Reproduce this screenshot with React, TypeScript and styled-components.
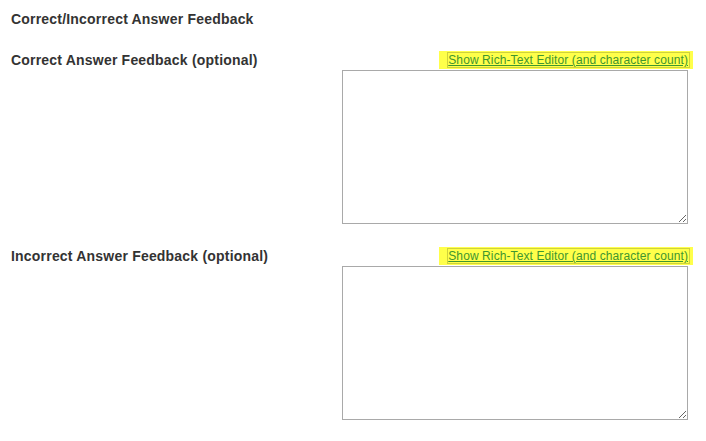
import React from "react";
import styled, { createGlobalStyle } from "styled-components";

const GlobalStyle = createGlobalStyle`
  body {
    margin: 0;
    background: #ffffff;
    font-family: "Liberation Sans", Arial, sans-serif;
  }
`;

const fields = [
  { id: "correct", label: "Correct Answer Feedback (optional)" },
  { id: "incorrect", label: "Incorrect Answer Feedback (optional)" },
];

const App: React.FC = () => {
  return (
    <>
      <GlobalStyle />
      <Page>
        <Heading>Correct/Incorrect Answer Feedback</Heading>
        <Fields>
          {fields.map((f) => (
            <Row key={f.id}>
              <Label htmlFor={f.id}>{f.label}</Label>
              <Editor>
                <Toolbar>
                  <Highlight>
                    <EditorLink href="#">
                      Show Rich-Text Editor (and character count)
                    </EditorLink>
                  </Highlight>
                </Toolbar>
                <TextArea id={f.id} />
              </Editor>
            </Row>
          ))}
        </Fields>
      </Page>
    </>
  );
};

export default App;

const Page = styled.div`
  padding: 11px 18px 0 11px;
  color: #333;
`;

const Heading = styled.h3`
  margin: 0 0 24px 0;
  font-size: 14px;
  line-height: 16px;
  font-weight: bold;
  letter-spacing: 0.2px;
`;

const Fields = styled.div`
  display: flex;
  flex-direction: column;
  gap: 23px;
`;

const Row = styled.div`
  display: grid;
  grid-template-columns: 331px 1fr;
`;

const Label = styled.label`
  font-size: 14px;
  font-weight: bold;
  line-height: 18px;
  letter-spacing: 0.2px;
`;

const Editor = styled.div`
  display: flex;
  flex-direction: column;
  align-items: stretch;
`;

const Toolbar = styled.div`
  display: flex;
  justify-content: flex-end;
  height: 18px;
  margin-right: -5px;
`;

const Highlight = styled.div`
  background: #ffff4a;
  padding: 2px 4px 0 9px;
  height: 18px;
  box-sizing: border-box;
`;

const EditorLink = styled.a`
  font-size: 12px;
  line-height: 14px;
  letter-spacing: 0.1px;
  color: #3f962f;
  text-decoration: underline;
  outline: 1px solid #cfd23c;
  display: inline-block;
  vertical-align: top;
  padding: 0 1px 0 0;
`;

const TextArea = styled.textarea`
  display: block;
  width: 100%;
  height: 154px;
  box-sizing: border-box;
  border: 1px solid #a9a9a9;
  margin: 1px 0 0 0;
  font-family: "Liberation Sans", Arial, sans-serif;
`;
